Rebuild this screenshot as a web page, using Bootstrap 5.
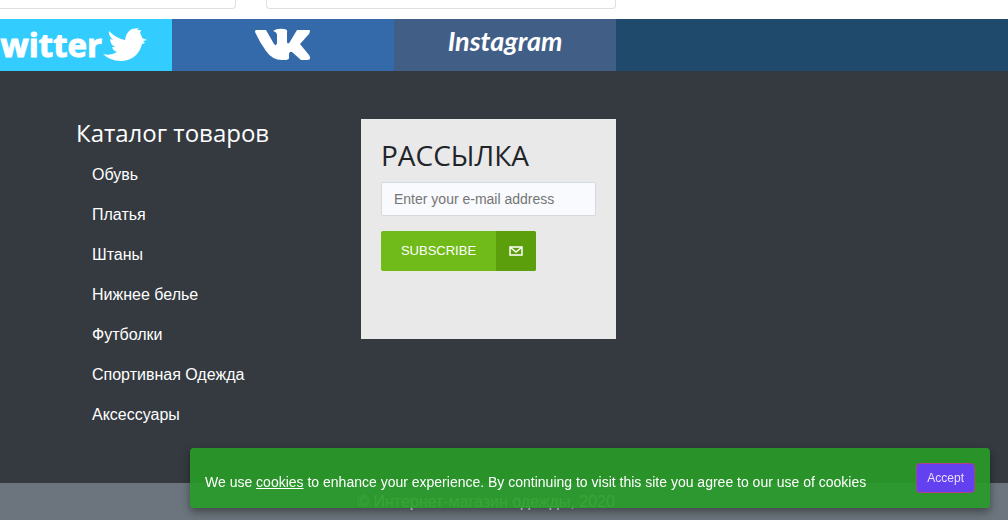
<!DOCTYPE html>
<html lang="ru">
<head>
<meta charset="utf-8">
<meta name="viewport" content="width=device-width, initial-scale=1">
<title>Интернет-магазин одежды</title>
<link href="https://cdn.jsdelivr.net/npm/bootstrap@5.3.0/dist/css/bootstrap.min.css" rel="stylesheet">
<style>
body{font-family:"Liberation Sans",Arial,sans-serif;font-size:16px;line-height:24px;background:#fff;overflow-x:hidden}
h2,h3{font-family:"Open Sans","Noto Sans",sans-serif}
.tiles{display:grid;grid-template-columns:236fr 350fr 362fr;column-gap:30px;height:9px;margin-bottom:10px}
.tile{border:1px solid #dfdfdf;border-top:0;border-radius:0 0 4px 4px}
.tile:first-child{border-left:0;border-bottom-left-radius:0}
.social{display:grid;grid-template-columns:minmax(0,172fr) 222fr 222fr 392fr;background:#1f4a6b}
.social a{height:52px;color:#fff;text-decoration:none}
.tw{background:#3cf}.vk{background:#356aaa}.ig{background:#415e87}
.tw-word{font:700 33px/52px "Open Sans",sans-serif;-webkit-text-stroke:1px #fff}
.ig-word{font:italic 700 27px/44px Lato,sans-serif}
.foot{background:#343a40}
.foot-grid{display:grid;grid-template-columns:285fr 255fr 392fr;align-items:start;padding:48px 0 48px 76px}
.cat-title{font-size:24px;line-height:28px;margin:0 0 8px}
.cat a{color:#fff;text-decoration:none;padding:8px 16px;line-height:24px}
.news{background:#e9e9e9;padding:20px;min-height:220px}
.news h2{font-size:28px;line-height:33px;font-weight:400;margin:0 0 10px;color:#212529}
.news .form-control{height:34px;font-size:14px;padding:6px 12px;border-color:#d5dadc;border-radius:2px;background:#f8fafd;margin-bottom:15px}
.news .form-control::placeholder{color:#757575}
.sub{border:0;padding:0;border-radius:2px;overflow:hidden;height:40px;background:#70bb19;color:#fff;font-size:13px}
.sub .lbl{width:115px}.sub .ico{width:40px;height:40px;background:#5ba00c}
.copy{background:#6c757d;color:#fff;height:37px;padding-top:7px;padding-right:36px}
.cookie{left:190px;right:18px;bottom:12px;height:60px;padding:0 15px;border-radius:4px;background:rgba(40,155,40,.92);color:#fff;font-size:14px;box-shadow:0 4px 8px rgba(0,0,0,.4)}
.cookie p{margin:8px 0 0}
.cookie a{color:#fff}
.accept{background:#6340f0;color:#e8e0ff;border:1px solid #b5408a;border-radius:4px;font-size:12px;line-height:18px;padding:5px 10px}
</style>
</head>
<body>
<div class="tiles"><div class="tile"></div><div class="tile"></div></div>
<nav class="social" aria-label="Социальные сети">
<a href="#" class="tw d-flex justify-content-end align-items-center"><span class="tw-word">witter</span>
<svg class="me-4 flex-shrink-0" width="46" height="36" viewBox="0 0 46 36" fill="#fff" aria-hidden="true"><path d="M1 27Q9 29 15 25Q11 24 10 20H13Q8 17 8 12L11 13Q6 8 7 4Q15 12 23 13Q24 5 30 2L37 1L35 3L39 3L38 6Q40 9 40 11L45 13L41 14L43 16L40 17C37 29 28 34 19 34Q8 34 1 27Z"/></svg></a>
<a href="#" class="vk d-flex justify-content-center align-items-center" aria-label="VK"><svg width="56" height="34" viewBox="0 0 56 34" fill="#fff" aria-hidden="true"><path d="M1 2H11L19 16Q22 19 22 14V7Q22 4 18 3Q22 0 29 1Q33 1 32 5V14Q33 18 36 12L42 2H54Q56 2 54 6L45 16L54 27Q57 32 52 32H46L37 24Q34 23 34 27V30Q34 32 29 32Q18 33 11 23Q5 15 0 4Q0 2 1 2Z"/></svg></a>
<a href="#" class="ig d-flex justify-content-center"><span class="ig-word">Instagram</span></a>
</nav>
<footer class="foot text-white">
<div class="foot-grid">
<section><h3 class="cat-title">Каталог товаров</h3>
<nav class="cat nav flex-column"><a href="#">Обувь</a><a href="#">Платья</a><a href="#">Штаны</a><a href="#">Нижнее белье</a><a href="#">Футболки</a><a href="#">Спортивная Одежда</a><a href="#">Аксессуары</a></nav></section>
<section class="news"><h2>РАССЫЛКА</h2>
<form><input type="email" class="form-control" placeholder="Enter your e-mail address" aria-label="Enter your e-mail address">
<button type="button" class="sub d-flex align-items-center"><span class="lbl">SUBSCRIBE</span><span class="ico d-flex align-items-center justify-content-center"><svg width="14" height="10" viewBox="0 0 14 10" fill="none" stroke="#fff" stroke-width="1.5" aria-hidden="true"><path d="M1 1H13V9H1ZM1 1L7 6L13 1"/></svg></span></button></form></section>
</div>
<div class="copy text-center">© Интернет-магазин одежды, 2020</div>
</footer>
<div class="cookie position-fixed d-flex align-items-center justify-content-between" role="region" aria-label="Cookies"><p>We use <a href="#">cookies</a> to enhance your experience. By continuing to visit this site you agree to our use of cookies</p><button type="button" class="accept">Accept</button></div>
<script src="https://cdn.jsdelivr.net/npm/bootstrap@5.3.0/dist/js/bootstrap.bundle.min.js"></script>
</body>
</html>
